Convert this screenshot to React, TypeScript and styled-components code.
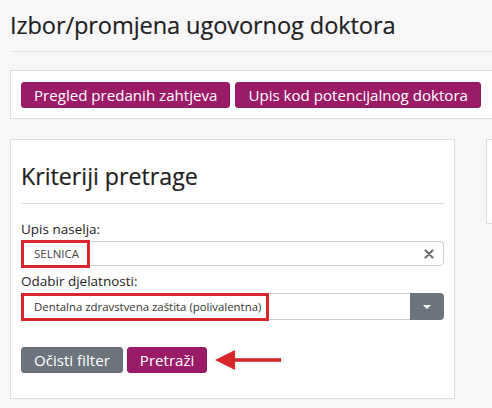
import React from 'react';
import styled, { createGlobalStyle } from 'styled-components';

const GlobalStyle = createGlobalStyle`
  html, body {
    margin: 0;
    padding: 0;
    background: #f7f7f7;
    overflow: hidden;
  }
  body {
    font-family: "Open Sans", "Noto Sans", Arial, sans-serif;
    color: #212529;
  }
`;

const Page = styled.div`
  width: 100%;
  height: 408px;
  overflow: hidden;
  padding-left: 10px;
  box-sizing: border-box;
`;

const Header = styled.div`
  height: 51px;
  border-bottom: 1px solid #e2e2e2;
  display: flex;
  align-items: center;
  margin-right: -10px;
`;

const Title = styled.h1`
  margin: 0;
  font-size: 23.6px;
  font-weight: 400;
  color: #1f1f1f;
  letter-spacing: -0.1px;
  padding-bottom: 2px;
  -webkit-text-stroke: 0.2px #1f1f1f;
`;

const Card = styled.div`
  background: #fff;
  border: 1px solid #dedede;
  box-sizing: border-box;
`;

const ActionCard = styled(Card)`
  margin-top: 18px;
  margin-right: -40px;
  height: 49px;
  padding: 11px 10px;
  display: flex;
  gap: 5px;
`;

const Row = styled.div`
  margin-top: 20px;
  display: flex;
  gap: 31px;
  align-items: flex-start;
  margin-right: -60px;
`;

const SearchCard = styled(Card)`
  width: 445px;
  height: 260px;
  flex-shrink: 0;
  padding: 10px 10px 0 10px;
  display: flex;
  flex-direction: column;
`;

const SideCard = styled(Card)`
  flex: 1;
  height: 85px;
`;

const Button = styled.button<{ $variant?: 'primary' | 'secondary' }>`
  height: 26px;
  padding: 0 12px;
  border: 1px solid ${p => (p.$variant === 'secondary' ? '#656d74' : '#8e1a5f')};
  border-radius: 3px;
  background: ${p => (p.$variant === 'secondary' ? '#6c757d' : '#9c1b67')};
  color: #fff;
  font-family: inherit;
  font-size: 15.1px;
  line-height: 24px;
  white-space: nowrap;
  cursor: pointer;
`;

const Heading = styled.h2`
  margin: 0;
  padding-top: 10px;
  height: 54px;
  box-sizing: border-box;
  font-size: 23.2px;
  font-weight: 400;
  color: #1f1f1f;
  -webkit-text-stroke: 0.2px #1f1f1f;
  border-bottom: 1px solid #dedede;
`;

const Label = styled.label<{ $first?: boolean }>`
  display: block;
  font-size: 13.5px;
  color: #222;
  margin-top: ${p => (p.$first ? 16 : 6)}px;
  line-height: 18px;
`;

const FieldWrap = styled.div`
  position: relative;
  margin-top: 3px;
  display: flex;
`;

const Input = styled.div`
  flex: 1;
  height: 25px;
  border: 1px solid #cfcfcf;
  border-radius: 0 4px 4px 0;
  box-sizing: border-box;
  display: flex;
  align-items: center;
  padding-left: 12px;
  font-size: 11.5px;
  color: #444;
  position: relative;
`;

const Clear = styled.span`
  position: absolute;
  right: 9px;
  top: 50%;
  transform: translateY(-50%);
  display: flex;
`;

const Select = styled.div`
  flex: 1;
  height: 27px;
  border: 1px solid #cfcfcf;
  border-right: none;
  box-sizing: border-box;
  display: flex;
  align-items: center;
  padding-left: 12px;
  font-size: 11.4px;
  color: #333;
`;

const Caret = styled.div`
  width: 34px;
  height: 27px;
  background: #6c757d;
  border-radius: 0 4px 4px 0;
  display: flex;
  align-items: center;
  justify-content: center;
  &::after {
    content: '';
    border-left: 4px solid transparent;
    border-right: 4px solid transparent;
    border-top: 4px solid #fff;
  }
`;

const Highlight = styled.div<{ $w: number; $h: number; $top: number }>`
  position: absolute;
  left: 0;
  top: ${p => p.$top}px;
  width: ${p => p.$w}px;
  height: ${p => p.$h}px;
  border: 3px solid #d7262c;
  box-sizing: border-box;
  pointer-events: none;
`;

const Actions = styled.div`
  margin-top: 27px;
  display: flex;
  align-items: center;
  gap: 4px;
`;

const Arrow = styled.svg`
  margin-left: 4px;
`;

export default function App() {
  return (
    <>
      <GlobalStyle />
      <Page>
        <Header>
          <Title>Izbor/promjena ugovornog doktora</Title>
        </Header>

        <ActionCard>
          <Button>Pregled predanih zahtjeva</Button>
          <Button>Upis kod potencijalnog doktora</Button>
        </ActionCard>

        <Row>
          <SearchCard>
            <Heading>Kriteriji pretrage</Heading>

            <Label $first>Upis naselja:</Label>
            <FieldWrap>
              <Input>
                SELNICA
                <Clear>
                  <svg width="10" height="10" viewBox="0 0 10 10">
                    <path d="M1.5 1.5 L8.5 8.5 M8.5 1.5 L1.5 8.5" stroke="#6f6f6f" strokeWidth="2.2" strokeLinecap="round" />
                  </svg>
                </Clear>
              </Input>
              <Highlight $w={69} $h={28} $top={-1} />
            </FieldWrap>

            <Label>Odabir djelatnosti:</Label>
            <FieldWrap>
              <Select>Dentalna zdravstvena zaštita (polivalentna)</Select>
              <Caret />
              <Highlight $w={248} $h={28} $top={0} />
            </FieldWrap>

            <Actions>
              <Button $variant="secondary">Očisti filter</Button>
              <Button>Pretraži</Button>
              <Arrow width="66" height="22" viewBox="0 0 66 22">
                <path d="M0 11 L20 1 L20 21 Z" fill="#d7262c" />
                <rect x="18" y="9.2" width="48" height="3.6" fill="#d7262c" />
              </Arrow>
            </Actions>
          </SearchCard>
          <SideCard />
        </Row>
      </Page>
    </>
  );
}
